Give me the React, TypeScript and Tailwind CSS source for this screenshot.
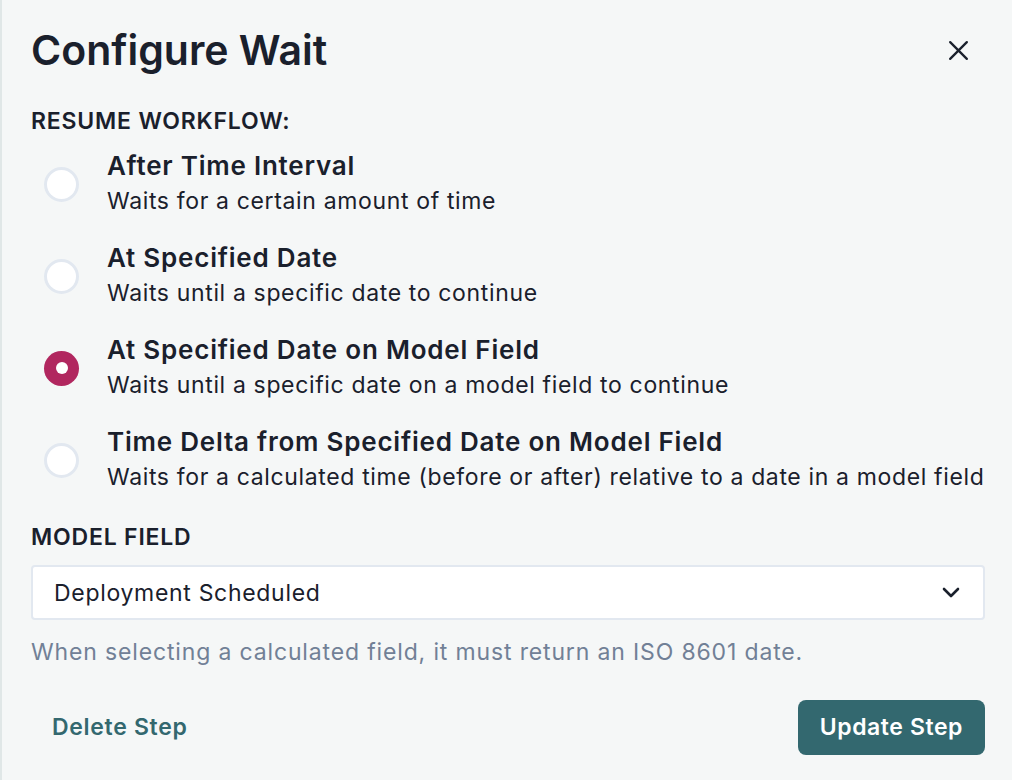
import { useState } from "react";

const OPTIONS = [
  { id: "interval", title: "After Time Interval", desc: "Waits for a certain amount of time" },
  { id: "date", title: "At Specified Date", desc: "Waits until a specific date to continue" },
  {
    id: "modelDate",
    title: "At Specified Date on Model Field",
    desc: "Waits until a specific date on a model field to continue",
  },
  {
    id: "delta",
    title: "Time Delta from Specified Date on Model Field",
    desc: "Waits for a calculated time (before or after) relative to a date in a model field",
  },
];

export default function App() {
  const [selected, setSelected] = useState("modelDate");

  return (
    <div
      className="min-h-[780px] border-l-2 border-[#e0e7e7] bg-[#f5f7f7] pl-[29px] pr-[27px] pt-[26px] text-[#1a202c]"
      style={{ fontFamily: "Inter, 'Noto Sans', sans-serif" }}
    >
      <div className="flex items-center justify-between">
        <h1 className="text-[41px] font-semibold leading-[48px]">Configure Wait</h1>
        <button className="mr-[13px] flex size-[28px] items-center justify-center text-[#1a202c]">
          <svg viewBox="0 0 24 24" className="size-[25px]" fill="none" stroke="currentColor" strokeWidth="2.2" strokeLinecap="round">
            <path d="M4 4L20 20M20 4L4 20" />
          </svg>
        </button>
      </div>

      <p className="mt-[33px] text-[23px] font-semibold uppercase leading-[28px] tracking-[0.035em]">Resume Workflow:</p>

      <div className="mt-[14px] flex flex-col gap-[22px]">
        {OPTIONS.map((o) => {
          const active = selected === o.id;
          return (
            <label key={o.id} className="flex cursor-pointer items-center" onClick={() => setSelected(o.id)}>
              <span className="ml-[13px] mr-[28px] flex w-[35px] shrink-0 items-center justify-center">
                {active ? (
                  <span className="flex size-[35px] items-center justify-center rounded-full bg-[#b1275f]">
                    <span className="size-[12px] rounded-full bg-white" />
                  </span>
                ) : (
                  <span className="size-[35px] rounded-full border-[3px] border-[#e2e8f0] bg-white" />
                )}
              </span>
              <span className="flex min-w-0 flex-col whitespace-nowrap">
                <span className="text-[26px] font-semibold leading-[34px] tracking-[0.03em]">{o.title}</span>
                <span className="text-[23px] leading-[36px] tracking-[0.028em]">{o.desc}</span>
              </span>
            </label>
          );
        })}
      </div>

      <p className="mt-[28px] text-[23px] font-semibold uppercase leading-[28px] tracking-[0.035em]">Model Field</p>

      <button className="mt-[14px] flex h-[55px] w-full items-center justify-between rounded-[4px] border-2 border-[#e2e8f0] bg-white pl-[21px] pr-[23px] text-left">
        <span className="text-[23px] leading-[28px] tracking-[0.03em]">Deployment Scheduled</span>
        <svg viewBox="0 0 18 11" className="h-[11px] w-[18px]" fill="none" stroke="#1a202c" strokeWidth="2.6" strokeLinecap="round" strokeLinejoin="round">
          <path d="M2 2L9 9L16 2" />
        </svg>
      </button>

      <p className="mt-[18px] text-[23px] leading-[28px] tracking-[0.037em] text-[#718096]">
        When selecting a calculated field, it must return an ISO 8601 date.
      </p>

      <div className="mt-[34px] flex items-center justify-between">
        <button className="h-[55px] rounded-[8px] px-[21px] text-[23px] font-semibold tracking-[0.03em] text-[#33686f]">
          Delete Step
        </button>
        <button className="h-[55px] rounded-[8px] bg-[#33686f] px-[22px] text-[23px] font-semibold tracking-[0.025em] text-white">
          Update Step
        </button>
      </div>
    </div>
  );
}
